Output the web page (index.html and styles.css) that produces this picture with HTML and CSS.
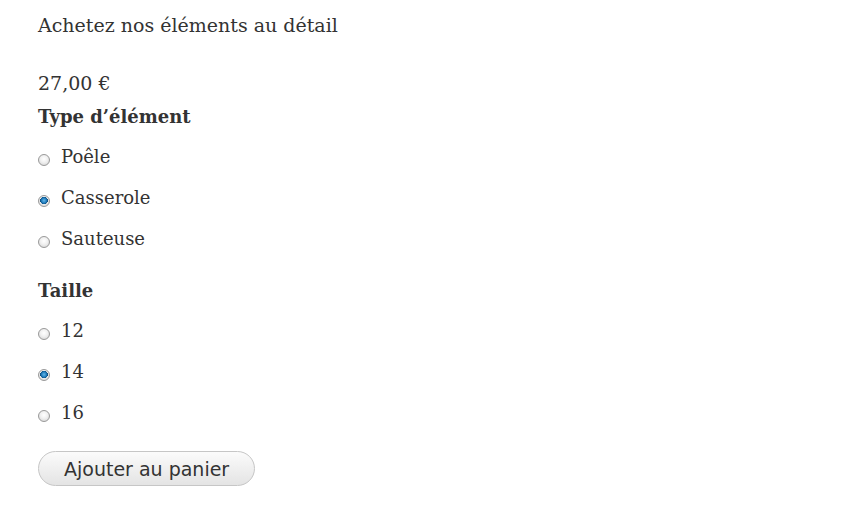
FILE: index.html
```html
<!DOCTYPE html>
<html lang="fr">
<head>
  <meta charset="UTF-8">
  <title>Achetez nos éléments au détail</title>
  <link rel="stylesheet" href="styles.css">
</head>
<body>

  <div class="page">
    <h1 class="titre">Achetez nos éléments au détail</h1>
    <p class="prix">27,00 €</p>

    <form class="options">
      <div class="groupe">
        <h3 class="groupe-titre">Type d’élément</h3>
        <label class="choix"><input type="radio" name="type" value="poele"> Poêle</label>
        <label class="choix"><input type="radio" name="type" value="casserole" checked> Casserole</label>
        <label class="choix"><input type="radio" name="type" value="sauteuse"> Sauteuse</label>
      </div>

      <div class="groupe">
        <h3 class="groupe-titre">Taille</h3>
        <label class="choix"><input type="radio" name="taille" value="12"> 12</label>
        <label class="choix"><input type="radio" name="taille" value="14" checked> 14</label>
        <label class="choix"><input type="radio" name="taille" value="16"> 16</label>
      </div>

      <button type="button" class="btn-panier">Ajouter au panier</button>
    </form>
  </div>

</body>
</html>
```

FILE: styles.css
```css
body {
  margin: 0;
  background: #fff;
  color: #333;
  font-family: "DejaVu Serif", "Liberation Serif", serif;
}
.page { padding: 11px 38px; }

.titre {
  margin: 0;
  font-size: 19px;
  font-weight: normal;
  line-height: 28px;
}
.prix {
  margin: 30px 0 0;
  font-size: 19px;
  line-height: 28px;
}

.groupe-titre {
  margin: 6px 0 0;
  font-size: 18px;
  line-height: 28px;
}
.groupe + .groupe { margin-top: 18px; }

.choix {
  display: flex;
  align-items: center;
  gap: 11px;
  font-size: 18px;
  line-height: 41px;
}
.groupe-titre + .choix { margin-top: 5px; }

.choix input {
  appearance: none;
  margin: 0;
  width: 12px;
  height: 12px;
  border-radius: 50%;
  border: 1px solid #999;
  background: radial-gradient(circle at 50% 40%, #fff 0%, #f0f0f0 45%, #cfcfcf 100%);
  position: relative;
  top: 3px;
}
.choix input:checked {
  background:
    radial-gradient(circle at 50% 45%, #62b8ea 0%, #1f78b8 35%, #0b4c7c 50%, transparent 53%),
    radial-gradient(circle at 50% 40%, #fff 0%, #f0f0f0 45%, #cfcfcf 100%);
}

.btn-panier {
  margin-top: 18px;
  height: 35px;
  padding: 0 25px;
  border: 1px solid #c6c6c6;
  border-radius: 18px;
  background: linear-gradient(#fbfbfb, #e4e4e4);
  color: #333;
  font-family: "DejaVu Sans", Verdana, sans-serif;
  font-size: 19px;
  cursor: pointer;
}
```
